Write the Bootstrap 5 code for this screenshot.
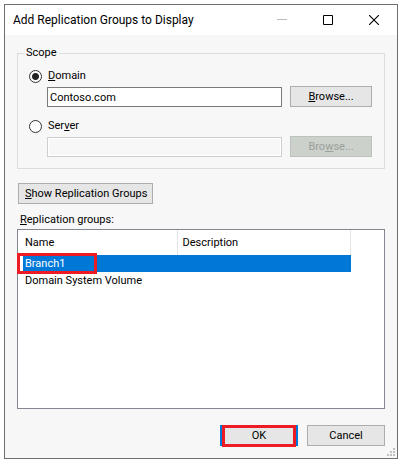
<!DOCTYPE html>
<html lang="en">
<head>
<meta charset="utf-8">
<meta name="viewport" content="width=device-width, initial-scale=1">
<title>Add Replication Groups to Display</title>
<link href="https://cdn.jsdelivr.net/npm/bootstrap@5.3.0/dist/css/bootstrap.min.css" rel="stylesheet">
<style>
body { font-family: Roboto, "Liberation Sans", sans-serif; font-size: 11px; line-height: 16px; color: #000; background: #fff; }
.page { padding: 4px 4px 1px; }
.dialog { background: #f7f7f7; border: 1px solid #6e6e6e; }
.title-bar { height: 30px; padding-left: 8px; }
.title-text { font-size: 12px; line-height: 16px; font-weight: 400; }
.win-btn { width: 46px; height: 30px; }
.content { padding: 10px 12px 12px; }
.group-box { border: 1px solid #dcdcdc; }
.group-box > legend { float: none; width: auto; margin: 0 0 0 6px; padding: 0 2px; font-size: 11px; line-height: 16px; }
.group-body { padding: 7px 12px 11px 11px; }
.radio-line { gap: 6px; height: 16px; margin-bottom: 2px; }
.radio-line .form-check-input { width: 13px; height: 13px; margin: 0; border: 1px solid #333; background-color: #fff; }
.radio-line .form-check-input:checked { background-image: radial-gradient(circle, #222 3px, #fff 4px); }
.field-line { gap: 8px; padding-left: 18px; }
.field-line + .radio-line { margin-top: 11px; }
.text-field { height: 20px; padding: 0 2px; font-size: 11px; line-height: 16px; color: #000; border: 1px solid #7a7a7a; border-radius: 0; background: #fff; }
.text-field:disabled { border-color: #cccfcc; background: #f7f7f7; box-shadow: inset 0 0 0 1px #fff; }
.push { height: 21px; padding: 0 6px; font-size: 11px; line-height: 16px; color: #000; border: 1px solid #adadad; border-radius: 0; background: #e6e6e6; }
.push:disabled { color: #9a9f9a; border-color: #bcc2bc; background: #ccd1cc; opacity: 1; }
.push-browse { width: 82px; }
.push-foot { width: 78px; }
.push-show { width: 135px; }
.push-default { border: 2px solid #0078d7; }
.show-line { margin: 14px 0 8px 1px; }
.list-label { padding-left: 3px; margin-bottom: 1px; }
.list-box { background: #fff; border: 1px solid #828790; padding-left: 5px; }
.list-table { width: 328px; table-layout: fixed; }
.list-table th { height: 25px; padding: 0 0 0 2px; font-weight: 400; border-right: 1px solid #e5e5e5; }
.list-table th + th { padding-left: 5px; }
.list-table td { height: 17px; padding: 0 0 0 2px; }
.list-table .col-name { width: 154px; }
.chosen { background: #0078d7; color: #fff; }
.outline-row, .outline-ok { border: 3px solid #ed1c24; pointer-events: none; }
.outline-row { left: -6px; top: -2px; width: 80px; height: 21px; }
.outline-ok { left: 2px; top: 0; width: 74px; height: 22px; }
.foot { gap: 9px; margin-top: 16px; }
.grip { right: 2px; bottom: 2px; }
</style>
<script src="https://cdn.jsdelivr.net/npm/bootstrap@5.3.0/dist/js/bootstrap.bundle.min.js"></script>
</head>
<body>
<div class="page d-flex flex-column min-vh-100">
  <main class="dialog d-flex flex-column flex-grow-1 position-relative">
    <header class="title-bar d-flex align-items-center bg-white">
      <h1 class="title-text m-0 me-auto">Add Replication Groups to Display</h1>
      <button type="button" class="win-btn btn border-0 rounded-0 p-0 d-flex align-items-center justify-content-center" aria-label="Minimize" disabled>
        <svg width="10" height="10"><path d="M0 4.5H10" stroke="#999"/></svg>
      </button>
      <button type="button" class="win-btn btn border-0 rounded-0 p-0 d-flex align-items-center justify-content-center" aria-label="Maximize">
        <svg width="10" height="10"><path d="M.5 .5H9.5V9.5H.5Z" fill="none" stroke="#000"/></svg>
      </button>
      <button type="button" class="win-btn btn border-0 rounded-0 p-0 d-flex align-items-center justify-content-center" aria-label="Close">
        <svg width="10" height="10"><path d="M0 0L10 10M10 0L0 10" stroke="#000" stroke-width="1.1"/></svg>
      </button>
    </header>

    <form class="content d-flex flex-column flex-grow-1">
      <fieldset class="group-box">
        <legend>Scope</legend>
        <div class="group-body">
          <div class="radio-line d-flex align-items-center">
            <input class="form-check-input" type="radio" name="scope" id="scopeDomain" checked>
            <label for="scopeDomain"><u>D</u>omain</label>
          </div>
          <div class="field-line d-flex align-items-end">
            <input class="text-field form-control" type="text" value="Contoso.com" aria-label="Domain name">
            <button type="button" class="push push-browse btn flex-shrink-0"><u>B</u>rowse...</button>
          </div>
          <div class="radio-line d-flex align-items-center">
            <input class="form-check-input" type="radio" name="scope" id="scopeServer">
            <label for="scopeServer">Ser<u>v</u>er</label>
          </div>
          <div class="field-line d-flex align-items-end">
            <input class="text-field form-control" type="text" aria-label="Server name" disabled>
            <button type="button" class="push push-browse btn flex-shrink-0" disabled>Bro<u>w</u>se...</button>
          </div>
        </div>
      </fieldset>

      <div class="show-line d-flex">
        <button type="button" class="push push-show btn text-nowrap"><u>S</u>how Replication Groups</button>
      </div>

      <div class="list-label" id="groupsLabel"><u>R</u>eplication groups:</div>
      <div class="list-box flex-grow-1">
        <table class="list-table" aria-labelledby="groupsLabel">
          <thead>
            <tr><th class="col-name" scope="col">Name</th><th scope="col">Description</th></tr>
          </thead>
          <tbody>
            <tr class="chosen"><td class="position-relative">Branch1<span class="outline-row position-absolute"></span></td><td></td></tr>
            <tr><td>Domain System Volume</td><td></td></tr>
          </tbody>
        </table>
      </div>

      <div class="foot d-flex justify-content-end">
        <div class="position-relative d-flex">
          <button type="submit" class="push push-foot push-default btn">OK</button>
          <span class="outline-ok position-absolute"></span>
        </div>
        <button type="button" class="push push-foot btn">Cancel</button>
      </div>
    </form>
    <svg class="grip position-absolute" width="8" height="8" fill="#bfbfbf" aria-hidden="true"><path d="M6 0h2v2h-2zM3 3h2v2h-2zM6 3h2v2h-2zM0 6h2v2h-2zM3 6h2v2h-2zM6 6h2v2h-2z"/></svg>
  </main>
</div>
</body>
</html>
